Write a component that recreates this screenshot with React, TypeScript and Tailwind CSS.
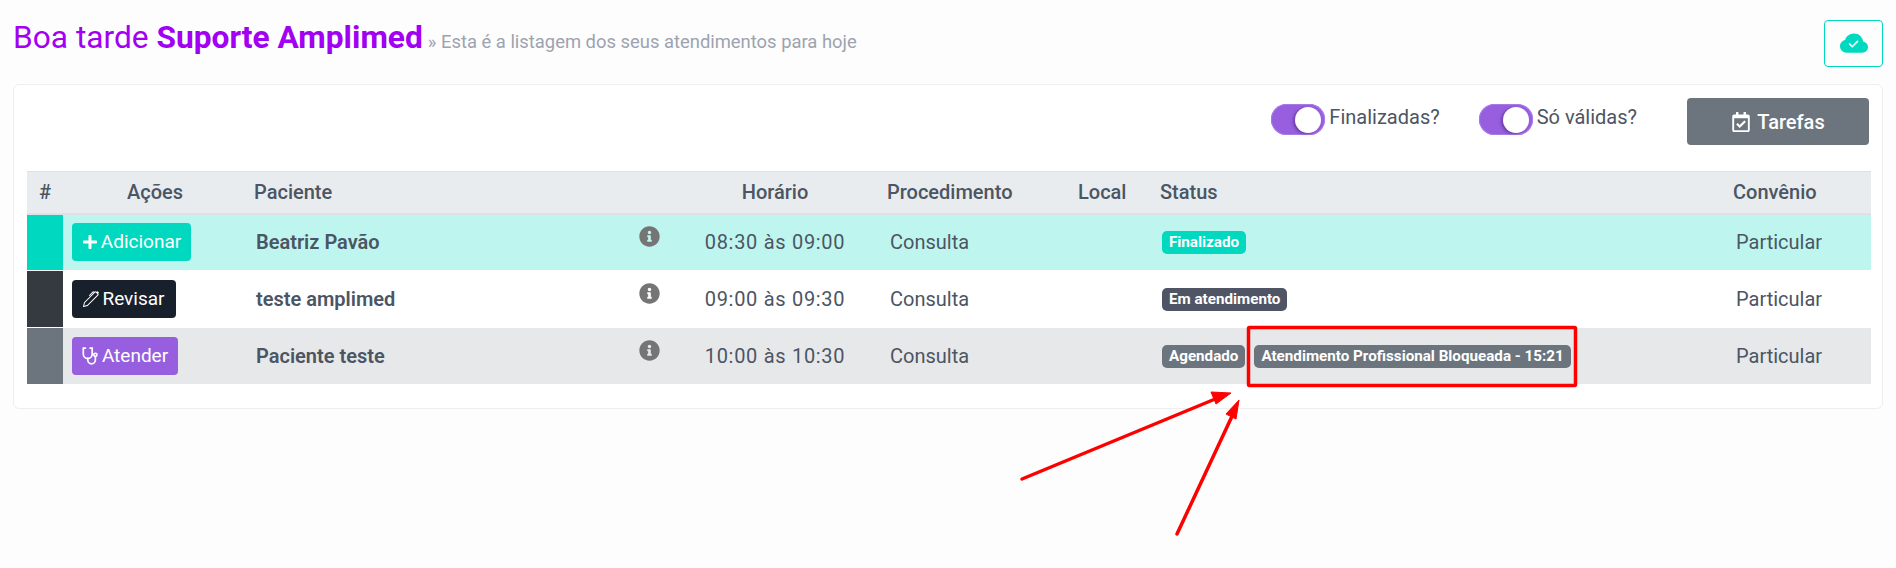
import { BsCloudCheckFill, BsPen } from 'react-icons/bs';
import { FaInfoCircle, FaPlus, FaRegCalendarCheck } from 'react-icons/fa';
import type { ReactNode } from 'react';

interface Row {
  name: string;
  time: string;
  rowClass: string;
  barClass: string;
  buttonClass: string;
  icon: ReactNode;
  label: string;
  badges: { text: string; className: string }[];
}

function StethoscopeIcon() {
  return (
    <svg width="17" height="18" viewBox="0 0 16 17" fill="none" stroke="currentColor" strokeWidth="1.6" strokeLinecap="round">
      <path d="M3.2 1H1.2v5.5a4.2 4.2 0 0 0 8.4 0V1H7.6" />
      <path d="M5.4 10.7v1.6a3.6 3.6 0 0 0 7.2 0V9" />
      <circle cx="12.6" cy="7.4" r="1.5" />
    </svg>
  );
}

const ROWS: Row[] = [
  {
    name: 'Beatriz Pavão',
    time: '08:30 às 09:00',
    rowClass: 'bg-[#bff5ef]',
    barClass: 'bg-[#00d9c0]',
    buttonClass: 'bg-[#00d9c0] w-[119px]',
    icon: <FaPlus size={16} />,
    label: 'Adicionar',
    badges: [{ text: 'Finalizado', className: 'bg-[#00d9c0]' }],
  },
  {
    name: 'teste amplimed',
    time: '09:00 às 09:30',
    rowClass: 'bg-white',
    barClass: 'bg-[#343a40]',
    buttonClass: 'bg-[#18202c] w-[104px]',
    icon: <BsPen size={16} />,
    label: 'Revisar',
    badges: [{ text: 'Em atendimento', className: 'bg-[#4f5565]' }],
  },
  {
    name: 'Paciente teste',
    time: '10:00 às 10:30',
    rowClass: 'bg-[#e7e8ea]',
    barClass: 'bg-[#6c757d]',
    buttonClass: 'bg-[#975fdf] w-[106px]',
    icon: <StethoscopeIcon />,
    label: 'Atender',
    badges: [
      { text: 'Agendado', className: 'bg-[#6c757d]' },
      { text: 'Atendimento Profissional Bloqueada - 15:21', className: 'bg-[#6c757d]' },
    ],
  },
];

function Toggle({ label }: { label: string }) {
  return (
    <div className="flex items-start gap-1">
      <span className="flex h-[31px] w-[54px] items-center justify-end rounded-full bg-[#975fdf] pr-[4px] shadow-[inset_0_0_0_1px_#a67be6]">
        <span className="h-[26px] w-[26px] rounded-full bg-white shadow-[-2px_1px_3px_rgba(60,20,110,0.45)]" />
      </span>
      <span className="text-[20px] leading-[26px] text-[#4b5563]">{label}</span>
    </div>
  );
}

export default function App() {
  return (
    <div className="relative h-[568px] w-[1896px] overflow-hidden bg-[#fdfdfd] font-['Roboto',sans-serif]">
      <div className="flex items-start justify-between pl-[13px] pr-[13px] pt-[20px]">
        <div className="flex items-baseline gap-[5px]">
          <h1 className="text-[31.7px] font-normal leading-[35px] text-[#a200f2]">
            Boa tarde <span className="font-bold">Suporte Amplimed</span>
          </h1>
          <span className="text-[18.4px] text-[#9ca3af]">» Esta é a listagem dos seus atendimentos para hoje</span>
        </div>
        <button className="flex h-[47px] w-[59px] items-center justify-center rounded border border-[#00d9c0] text-[#00d9c0]">
          <BsCloudCheckFill size={28} />
        </button>
      </div>

      <div className="mx-[13px] mt-[17px] h-[325px] rounded-md border border-[#eeeeee] bg-white px-[13px] pt-[13px]">
        <div className="flex h-[73px] items-start justify-end">
          <div className="mt-[6px] flex gap-[39px]">
            <Toggle label="Finalizadas?" />
            <Toggle label="Só válidas?" />
          </div>
          <button className="ml-[50px] flex h-[47px] w-[182px] items-center justify-center gap-[6px] rounded bg-[#6c757d] text-[20px] font-medium text-white">
            <FaRegCalendarCheck size={20} />
            Tarefas
          </button>
        </div>

        <table className="w-[1844px] table-fixed border-collapse">
          <colgroup>
            <col className="w-[36px]" />
            <col className="w-[184px]" />
            <col className="w-[433px]" />
            <col className="w-[190px]" />
            <col className="w-[200px]" />
            <col className="w-[80px]" />
            <col className="w-[575px]" />
            <col className="w-[146px]" />
          </colgroup>
          <thead>
            <tr className="h-[42px] border-y border-b-2 border-[#dee2e6] bg-[#e9ecef] text-[20px] font-medium text-[#4b5563]">
              <th className="text-center font-medium">#</th>
              <th className="text-center font-medium">Ações</th>
              <th className="pl-[7px] text-left font-medium">Paciente</th>
              <th className="text-center font-medium">Horário</th>
              <th className="pl-[17px] text-left font-medium">Procedimento</th>
              <th className="pl-[8px] text-left font-medium">Local</th>
              <th className="pl-[10px] text-left font-medium">Status</th>
              <th className="pl-[8px] text-left font-medium">Convênio</th>
            </tr>
          </thead>
          <tbody>
            {ROWS.map((row) => (
              <tr key={row.name} className={`h-[57px] border-b border-white text-[20px] text-[#4b5563] ${row.rowClass}`}>
                <td className={row.barClass} />
                <td className="pl-[9px]">
                  <button
                    className={`flex h-[38px] items-center justify-center gap-[3px] rounded text-[19px] text-white ${row.buttonClass}`}
                  >
                    {row.icon}
                    {row.label}
                  </button>
                </td>
                <td className="pl-[9px]">
                  <div className="flex items-center justify-between pr-[20px]">
                    <span className="font-semibold">{row.name}</span>
                    <FaInfoCircle size={21} className="mb-[12px] text-[#757575]" />
                  </div>
                </td>
                <td className="text-center tracking-[0.7px]">{row.time}</td>
                <td className="pl-[20px]">Consulta</td>
                <td />
                <td className="pl-[12px]">
                  <div className="flex gap-[9px]">
                    {row.badges.map((badge) => (
                      <span
                        key={badge.text}
                        className={`rounded-[5px] px-[7px] py-[2px] text-[15.2px] font-bold leading-[19px] text-white ${badge.className}`}
                      >
                        {badge.text}
                      </span>
                    ))}
                  </div>
                </td>
                <td className="pl-[11px]">Particular</td>
              </tr>
            ))}
          </tbody>
        </table>
      </div>

      {/* red annotation drawn over the screenshot */}
      <svg className="pointer-events-none absolute left-0 top-0" width="1896" height="568" fill="#ff0000" stroke="#ff0000">
        <rect x="1248.5" y="327.5" width="327" height="58" rx="1" fill="none" strokeWidth="3.5" />
        <line x1="1022" y1="479" x2="1220" y2="397" strokeWidth="3.5" strokeLinecap="round" />
        <polygon points="1231,393 1216,404 1211,392" strokeWidth="1" />
        <line x1="1177" y1="534" x2="1234" y2="412" strokeWidth="3.5" strokeLinecap="round" />
        <polygon points="1239,400 1236,419 1226,414" strokeWidth="1" />
      </svg>
    </div>
  );
}
